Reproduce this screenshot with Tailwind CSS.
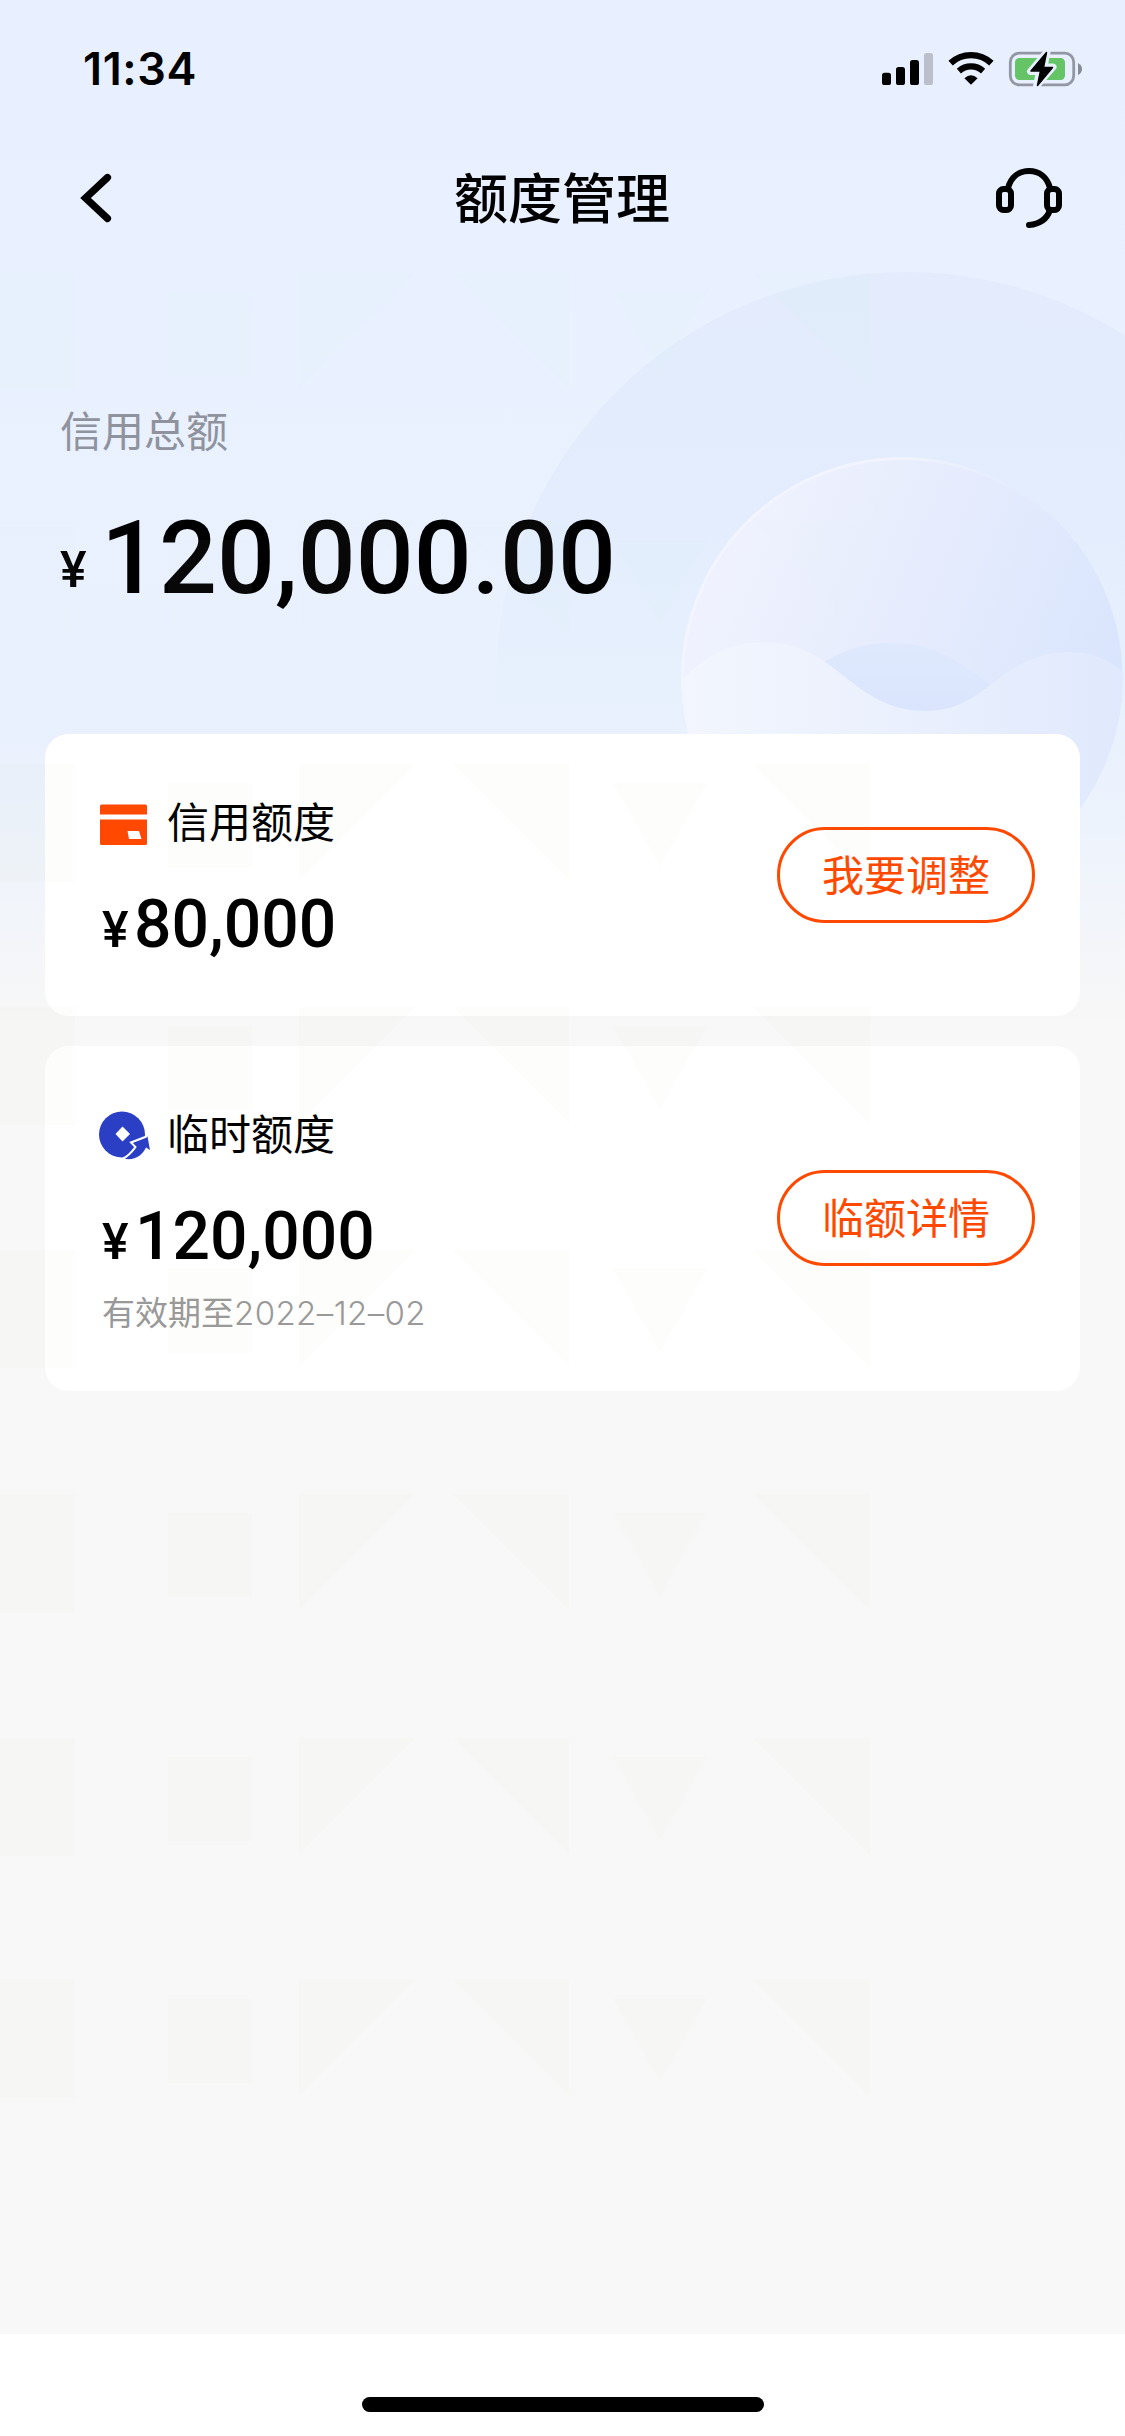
<!DOCTYPE html>
<html lang="zh-CN">
<head>
<meta charset="utf-8">
<title>额度管理</title>
<script src="https://cdn.jsdelivr.net/npm/@tailwindcss/browser@4"></script>
</head>
<body class="w-[1125px] h-[2436px] overflow-hidden bg-[#f8f8f8] font-['Noto_Sans_CJK_SC',sans-serif] text-black">
<div class="relative isolate flex h-[2436px] w-[1125px] flex-col overflow-hidden">

  <!-- header backdrop -->
  <svg class="absolute left-0 top-0 -z-10" width="1125" height="1020" viewBox="0 0 1125 1020" fill="none">
    <defs>
      <linearGradient id="sky" x1="0" y1="0" x2="0" y2="1">
        <stop offset="0" stop-color="#e8effe"/><stop offset=".27" stop-color="#e9f0ff"/><stop offset=".72" stop-color="#eaf1fe"/><stop offset=".8" stop-color="#edf3fd"/><stop offset="1" stop-color="#f7f7f7"/>
      </linearGradient>
      <linearGradient id="halo" x1="0" y1="0" x2="0" y2="1">
        <stop offset="0" stop-color="#e3ebfd"/><stop offset=".3" stop-color="#e3edfd"/><stop offset=".55" stop-color="#e8f1fd"/><stop offset=".72" stop-color="#edf3fd" stop-opacity="0"/>
      </linearGradient>
      <linearGradient id="orb" x1=".1" y1=".25" x2=".95" y2=".6">
        <stop offset="0" stop-color="#eff2fe"/><stop offset=".45" stop-color="#e6ecfd"/><stop offset="1" stop-color="#d9e5fd"/>
      </linearGradient>
      <linearGradient id="lens" x1="0" y1="0" x2="0" y2="1">
        <stop offset="0" stop-color="#dfe9fd"/><stop offset=".7" stop-color="#dae5fd"/>
      </linearGradient>
      <linearGradient id="wave" x1="0" y1="0" x2="1" y2="0">
        <stop offset="0" stop-color="#f3f6fe"/><stop offset=".5" stop-color="#eaf0fd"/><stop offset="1" stop-color="#e0e9fd"/>
      </linearGradient>
      <linearGradient id="rim" x1="0" y1="0" x2="1" y2="0">
        <stop offset="0" stop-color="#f3f5fe"/><stop offset=".5" stop-color="#f1f4fe"/><stop offset=".9" stop-color="#e3ebfd" stop-opacity="0"/>
      </linearGradient>
      <clipPath id="orbClip"><circle cx="902" cy="678" r="220.5"/></clipPath>
    </defs>
    <rect width="1125" height="1020" fill="url(#sky)"/>
    <circle cx="906" cy="682" r="410" fill="url(#halo)"/>
    <circle cx="902" cy="678" r="220.5" fill="url(#orb)"/>
    <g clip-path="url(#orbClip)">
      <path d="M790 690C825 655 855 643 893 643C937 643 962 664 992 686L930 740Z" fill="url(#lens)"/>
      <path d="M680 682C705 655 730 642 764 642C837 642 852 711 926 711C988 711 1000 652 1070 652C1095 652 1112 662 1125 674V900H680Z" fill="url(#wave)"/>
    </g>
    <circle cx="902" cy="678" r="219.5" stroke="url(#rim)" stroke-width="3"/>
  </svg>

  <!-- status bar -->
  <div class="flex h-[132px] shrink-0 items-start justify-between pl-[83px] pr-[43px] pt-[45px]">
    <div class="font-['Inter'] text-[45px] font-semibold leading-[48px] tracking-[0.6px]">11:34</div>
    <div class="flex pt-[4px]">
      <svg width="202" height="42" viewBox="880 49 202 42" fill="none">
        <g fill="#000"><rect x="882" y="72.7" width="9" height="12.3" rx="2.6"/><rect x="896" y="67" width="9" height="18" rx="2.6"/><rect x="910" y="60" width="9" height="25" rx="2.6"/></g>
        <rect x="924" y="53" width="9" height="32" rx="2.6" fill="#bbbfcb"/>
        <path d="M950.6 63.1A30 30 0 0 1 991.4 63.1" stroke="#000" stroke-width="6.4"/>
        <path d="M958.9 71.1A18 18 0 0 1 983.1 71.1" stroke="#000" stroke-width="6.2"/>
        <path d="M964.4 78.2Q971 72.4 977.6 78.2L971 84.8Z" fill="#000"/>
        <rect x="1010.3" y="53.2" width="63.4" height="31.6" rx="9" stroke="#9297a3" stroke-width="2.8"/>
        <rect x="1015" y="58" width="50" height="22" rx="4.5" fill="#65c466"/>
        <path d="M1078 63Q1082 65 1082 69T1078 75Z" fill="#888c97"/>
        <path d="M1047 52L1030.500 71.500H1039.500L1036.500 86L1053 67H1044Z" fill="#000" stroke="#e8effe" stroke-width="7" stroke-linejoin="round"/>
        <path d="M1046.500 52.500L1031 71H1040.500L1037.500 85.500L1052.500 67.500H1043.500Z" fill="#000" stroke="#000" stroke-width="1.500" stroke-linejoin="round"/>
      </svg>
    </div>
  </div>

  <!-- navigation bar -->
  <div class="grid h-[132px] shrink-0 grid-cols-[1fr_auto_1fr] items-center pl-[80px] pr-[61px]">
    <svg width="68" height="52" viewBox="80 172 68 52" fill="none"><path d="M107.500 177.500L85.500 198L107.500 218.500" stroke="#000" stroke-width="7.200" stroke-linecap="round"/></svg>
    <h1 class="-ml-[20px] pb-[4px] text-[54px] font-medium leading-[72px]">额度管理</h1>
    <svg class="justify-self-end" width="68" height="62" viewBox="996 167 68 62" fill="none" stroke="#000" stroke-width="6">
      <path d="M1008 188C1011 177 1019 171 1029 171S1047 177 1050 188"/>
      <rect x="999" y="189" width="12" height="21" rx="4.500"/><rect x="1047" y="189" width="12" height="21" rx="4.500"/>
      <path d="M1050 210C1047 219 1040 224 1029 225" stroke-linecap="round"/>
    </svg>
  </div>

  <!-- total credit -->
  <section class="mt-[135px] flex h-[219px] shrink-0 flex-col pl-[60px]">
    <div class="text-[42px] leading-[60px] text-[#8f939d]">信用总额</div>
    <div class="mt-[39px] flex items-end font-['Roboto'] font-medium">
      <span class="mb-[18px] w-[41px] text-[50px] leading-[60px]">¥</span>
      <span class="text-[102px] leading-[120px]">120,000.00</span>
    </div>
  </section>

  <!-- limit cards -->
  <div class="mt-[116px] flex shrink-0 flex-col gap-[30px] px-[45px]">
    <section class="flex h-[282px] items-center justify-between rounded-[24px] bg-white pl-[55px] pr-[45px]">
      <div class="flex h-full flex-col pt-[56px]">
        <div class="flex h-[60px] items-center">
          <svg width="67" height="60" viewBox="100 790 67 60"><path d="M101.500 804.500H145.500Q147 804.500 147 806V814.500H100V806Q100 804.500 101.500 804.500ZM100 819.500H147V843.500Q147 845 145.500 845H101.500Q100 845 100 843.500Z" fill="#ff4900"/><path d="M127.500 831H139L141.500 839H129Z" fill="#fff"/></svg>
          <span class="text-[42px] leading-[60px]">信用额度</span>
        </div>
        <div class="mt-[39px] flex items-baseline font-['Roboto'] font-medium">
          <span class="w-[34px] pl-[2px] text-[50px] leading-[72px]">¥</span>
          <span class="text-[66px] leading-[72px]">80,000</span>
        </div>
      </div>
      <button class="h-[96px] w-[258px] rounded-full border-[3px] border-[#ff4900] pb-[5px] text-[42px] leading-[60px] text-[#ff4900]">我要调整</button>
    </section>

    <section class="flex h-[345px] items-center justify-between rounded-[24px] bg-white pb-px pl-[55px] pr-[45px]">
      <div class="flex h-full flex-col pt-[56px]">
        <div class="flex h-[60px] items-center">
          <svg class="overflow-visible" width="67" height="60" viewBox="100 1102 67 60">
            <circle cx="122" cy="1134.500" r="23" fill="#2a3fc4"/>
            <path d="M122.500 1126.500L130 1134L122.500 1141.500L115.500 1134Z" fill="#fff"/>
            <path d="M123.500 1158.500C131 1155 133.500 1151.500 136.500 1146.500L131.500 1142.500L147.500 1136.500L150 1150L146 1147.500C142 1156 134 1161 123.500 1158.500Z" fill="#2a3fc4"/>
            <path d="M122.500 1159C129.500 1155.500 132.500 1151 135.500 1147L131 1142.500L146.500 1136.500" fill="none" stroke="#fff" stroke-width="2"/>
          </svg>
          <span class="text-[42px] leading-[60px]">临时额度</span>
        </div>
        <div class="mt-[39px] flex items-baseline font-['Roboto'] font-medium">
          <span class="w-[35px] pl-[2px] text-[50px] leading-[72px]">¥</span>
          <span class="text-[66px] leading-[72px]">120,000</span>
        </div>
        <div class="mt-[9px] pl-[2px] text-[33px] leading-[48px] text-[#999]">有效期至<span class="font-['Inter'] font-light tracking-[0.4px]">2022–12–02</span></div>
      </div>
      <button class="h-[96px] w-[258px] rounded-full border-[3px] border-[#ff4900] pb-[5px] text-[42px] leading-[60px] text-[#ff4900]">临额详情</button>
    </section>
  </div>

  <!-- home indicator area -->
  <div class="mt-auto flex h-[102px] shrink-0 justify-center bg-white pt-[63px]">
    <div class="h-[15px] w-[402px] rounded-full bg-black"></div>
  </div>

  <!-- repeating geometric watermark -->
  <svg class="pointer-events-none absolute left-0 top-0" width="1125" height="2333" viewBox="0 0 1125 2333" fill="#969632" fill-opacity=".02">
    <defs><path id="row" d="M0 0H75V118H0ZM168 19H252V103H168ZM299 0H415L299 116ZM453 0H569V116ZM613 19H707L660 102ZM753 0H870V117Z"/></defs>
    <g fill="#d0ffe0" fill-opacity=".08"><use href="#row" y="273"/><use href="#row" y="521" opacity=".4"/></g>
    <use href="#row" y="764"/><use href="#row" y="1007"/><use href="#row" y="1250"/><use href="#row" y="1494"/><use href="#row" y="1738"/><use href="#row" y="1980"/>
  </svg>
</div>
</body>
</html>
